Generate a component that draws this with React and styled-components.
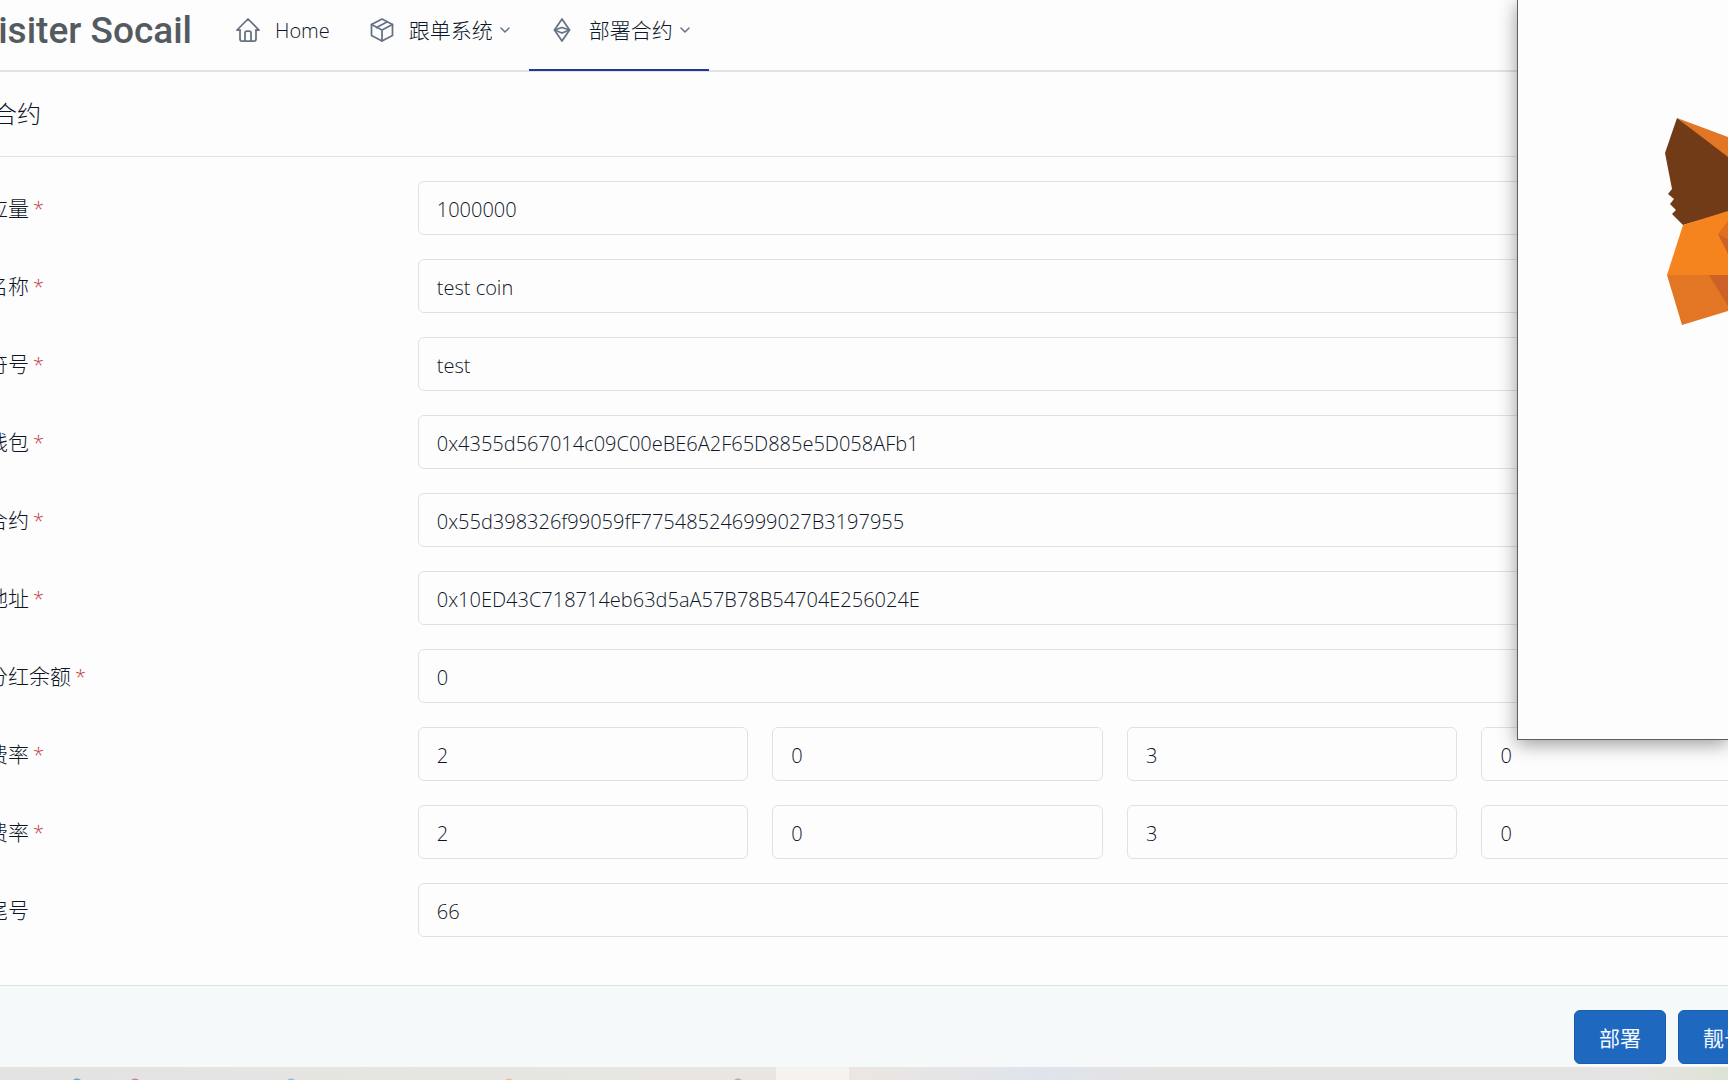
import React, { useState } from 'react';
import styled, { createGlobalStyle } from 'styled-components';

const GlobalStyle = createGlobalStyle`
  * {
    box-sizing: border-box;
  }
  body {
    margin: 0;
    overflow: hidden;
    background: #fdfdfd;
    color: #0d1628;
    font-family: 'Open Sans', 'Noto Sans CJK SC', sans-serif;
    font-size: 20px;
    font-weight: 300;
  }
`;

const Screen = styled.div`
  display: flex;
  flex-direction: column;
  height: 100vh;
  overflow: hidden;
`;

// the document is wider than the window on both sides
const Page = styled.div`
  flex: 1;
  min-height: 0;
  margin: 0 -108px 0 -79px;
  overflow: hidden;
`;

const Header = styled.header`
  display: flex;
  align-items: flex-start;
  height: 72px;
  padding: 0 24px;
  border-bottom: 2px solid #e2e2e3;
`;

const Brand = styled.a`
  width: 247px;
  margin-right: 23px;
  color: #535b60;
  font-family: Roboto, sans-serif;
  font-size: 37px;
  font-weight: 500;
  line-height: 62px;
  text-align: right;
  text-decoration: none;
  white-space: nowrap;
`;

const Nav = styled.nav`
  display: flex;
`;

const NavLink = styled.a`
  display: flex;
  align-items: center;
  height: 71px;
  padding: 0 19px 9px 21px;
  border-bottom: 2px solid ${(props) => (props.$active ? '#1f3a94' : 'transparent')};
  color: inherit;
  text-decoration: none;
  white-space: nowrap;

  svg {
    display: block;
    flex: none;
    fill: none;
    stroke: #667283;
    stroke-linecap: round;
    stroke-linejoin: round;
  }
`;

const NavText = styled.span`
  margin-left: 15px;
  padding-bottom: ${(props) => (props.$cjk ? '2px' : '0')};
  font-size: ${(props) => (props.$cjk ? '21px' : '20px')};
`;

const Chevron = styled.svg`
  margin-left: 7px;
`;

const CardHeader = styled.div`
  display: flex;
  align-items: center;
  height: 85px;
  padding: 0 24px 4px;
  border-bottom: 1px solid #e0e2e4;
`;

const CardTitle = styled.h3`
  margin: 0;
  font-size: 24px;
  font-weight: 300;
`;

const CardBody = styled.div`
  padding: 24px 24px 48px;
  display: flex;
  flex-direction: column;
  gap: 24px;
`;

const Row = styled.div`
  display: grid;
  grid-template-columns: 1fr 3fr;
  align-items: center;
  margin: 0 -12px;
`;

const Label = styled.label`
  padding: 0 12px;
  font-size: 21px;
  line-height: 30px;
  white-space: nowrap;
`;

const Required = styled.span`
  margin-left: 4px;
  color: #c23c41;
  font-size: 20px;
`;

const Fields = styled.div`
  display: flex;
  gap: 24px;
  padding: 0 12px;
`;

const Input = styled.input`
  flex: 1;
  min-width: 0;
  height: 54px;
  padding: 2px 18px 0;
  border: 1px solid #dfe2e5;
  border-radius: 6px;
  outline: none;
  background: #fdfdfd;
  color: inherit;
  font: inherit;
`;

const CardFooter = styled.div`
  display: flex;
  justify-content: flex-end;
  gap: 12px;
  padding: 24px;
  border-top: 1px solid #e0e4e7;
  background: #f5f9fa;
`;

const Button = styled.button`
  height: 54px;
  padding: 0 24px;
  border: 1px solid #1a5cae;
  border-radius: 6px;
  background: #1e68c0;
  color: #f3f9ff;
  font-family: inherit;
  font-size: 21px;
  font-weight: 400;
`;

const WalletWindow = styled.aside`
  position: fixed;
  top: 0;
  right: 0;
  width: 211px;
  height: 740px;
  padding-top: 117px;
  border: solid #5e5e5e;
  border-width: 0 0 1px 1px;
  background: #fdfdfd;
  box-shadow: 0 4px 18px rgba(0, 0, 0, 0.4);
`;

const Fox = styled.svg`
  display: block;
  margin-left: auto;
`;

const Taskbar = styled.div`
  flex: none;
  height: 13px;
  padding-left: 44.9%;
  background:
    radial-gradient(circle at 77px 17px, #5fa9c8 5px, transparent 6px),
    radial-gradient(circle at 135px 17px, #d87f9c 5px, transparent 6px),
    radial-gradient(circle at 291px 17px, #8fbfda 5px, transparent 6px),
    radial-gradient(circle at 509px 17px, #f0bd92 5px, transparent 6px),
    radial-gradient(circle at 738px 17px, #b3b1b0 5px, transparent 6px),
    linear-gradient(90deg, #e5e3e2, #e8e6e2 35%, #ebe6e2 50%, #dfe4ec 60%, #e5e3e1 68%, #e6e4e2 95%, #dde3d4);
`;

const TaskbarActive = styled.div`
  width: 73px;
  height: 13px;
  background: #f5f2ef;
`;

const fields = [
  { name: 'supply', label: '总供应量', required: true, values: ['1000000'] },
  { name: 'name', label: '代币名称', required: true, values: ['test coin'] },
  { name: 'symbol', label: '代币符号', required: true, values: ['test'] },
  { name: 'wallet', label: '营销钱包', required: true, values: ['0x4355d567014c09C00eBE6A2F65D885e5D058AFb1'] },
  { name: 'token', label: '分红合约', required: true, values: ['0x55d398326f99059fF775485246999027B3197955'] },
  { name: 'router', label: '路由地址', required: true, values: ['0x10ED43C718714eb63d5aA57B78B54704E256024E'] },
  { name: 'balance', label: '最低分红余额', required: true, values: ['0'] },
  { name: 'buyFee', label: '买入费率', required: true, values: ['2', '0', '3', '0'] },
  { name: 'sellFee', label: '卖出费率', required: true, values: ['2', '0', '3', '0'] },
  { name: 'tail', label: '靓号尾号', required: false, values: ['66'] },
];

const ChevronDown = () => (
  <Chevron width="10" height="6" viewBox="0 0 10 6" strokeWidth="1.5">
    <path d="M1 1l4 4l4 -4" />
  </Chevron>
);

const FormRow = ({ field }) => {
  const [values, setValues] = useState(field.values);

  const handleChange = (index, value) => {
    setValues(values.map((v, i) => (i === index ? value : v)));
  };

  return (
    <Row>
      <Label htmlFor={`${field.name}-0`}>
        {field.label}
        {field.required && <Required>*</Required>}
      </Label>
      <Fields>
        {values.map((value, i) => (
          <Input
            key={i}
            type="text"
            id={`${field.name}-${i}`}
            aria-label={i > 0 ? `${field.label} ${i + 1}` : undefined}
            value={value}
            onChange={(e) => handleChange(i, e.target.value)}
          />
        ))}
      </Fields>
    </Row>
  );
};

export default function App() {
  return (
    <Screen>
      <GlobalStyle />
      <Page>
        <Header>
          <Brand href="#">Visiter Socail</Brand>
          <Nav>
            <NavLink href="#">
              <svg width="24" height="24" viewBox="0 0 24 24" strokeWidth="1.75">
                <path d="M4 12H1L12 1l11 11h-3" />
                <path d="M4 12v9a2 2 0 0 0 2 2h12a2 2 0 0 0 2 -2v-9" />
                <path d="M9 23v-8a2 2 0 0 1 2 -2h2a2 2 0 0 1 2 2v8" />
              </svg>
              <NavText>Home</NavText>
            </NavLink>
            <NavLink href="#">
              <svg width="24" height="24" viewBox="0 0 24 24" strokeWidth="1.75">
                <path d="M12 1l10.500 5.500v11L12 23L1.500 17.500v-11z" />
                <path d="M12 12l10.500 -5.500M12 12v11M12 12L1.500 6.500M17 4L6.500 9.500" />
              </svg>
              <NavText $cjk>跟单系统</NavText>
              <ChevronDown />
            </NavLink>
            <NavLink href="#" $active>
              <svg width="24" height="24" viewBox="0 0 24 24" strokeWidth="1.75">
                <path d="M12 1l7.500 11L12 23L4.500 12z" />
                <path d="M4.500 12L12 9.500l7.500 2.500L12 15z" />
              </svg>
              <NavText $cjk>部署合约</NavText>
              <ChevronDown />
            </NavLink>
          </Nav>
        </Header>

        <CardHeader>
          <CardTitle>部署合约</CardTitle>
        </CardHeader>
        <CardBody>
          {fields.map((field) => (
            <FormRow key={field.name} field={field} />
          ))}
        </CardBody>
        <CardFooter>
          <Button type="button">部署</Button>
          <Button type="button">靓号部署</Button>
        </CardFooter>
      </Page>

      <Taskbar>
        <TaskbarActive />
      </Taskbar>

      <WalletWindow>
        <Fox width="64" height="210" viewBox="184 37 64 210">
          <path fill="#e27625" d="M197 38L248 57v22z" />
          <path fill="#713b17" d="M197 38L185 73l7 36l-4 5l6 5l-4 5l6 6l-4 4l11 11l45 -13V77z" />
          <path fill="#f5841f" d="M203 145l45 -14v64h-61z" />
          <path fill="#de701f" d="M248 141l-10 13l10 5z" />
          <path fill="#cd6128" d="M238 154l10 5v15z" />
          <path fill="#e27625" d="M187 195h61v36L202 245z" />
          <path fill="#cd6128" d="M229 195h19v31z" />
        </Fox>
      </WalletWindow>
    </Screen>
  );
}
